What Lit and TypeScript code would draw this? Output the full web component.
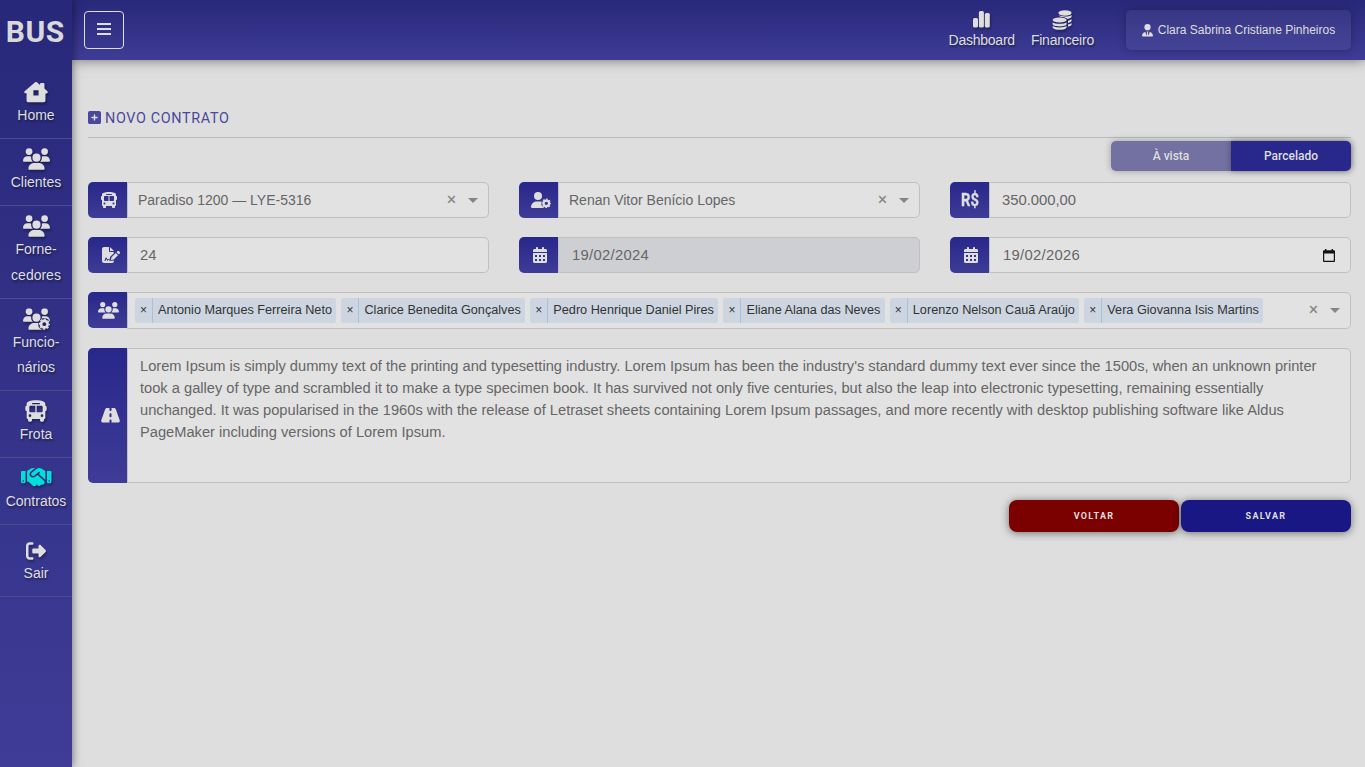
import { LitElement, html, css, svg } from "lit";
import { customElement } from "lit/decorators.js";

const USERS = svg`<path d="M144 0a80 80 0 1 1 0 160A80 80 0 1 1 144 0zM512 0a80 80 0 1 1 0 160A80 80 0 1 1 512 0zM0 298.7C0 239.8 47.8 192 106.7 192h42.7c15.9 0 31 3.5 44.6 9.7c-1.3 7.2-1.9 14.7-1.9 22.3c0 38.2 16.8 72.5 43.3 96H21.3C9.6 320 0 310.4 0 298.7zM405.3 320c26.6-23.5 43.3-57.8 43.3-96c0-7.6-.7-15-1.9-22.3c13.6-6.3 28.7-9.7 44.6-9.7h42.7C592.2 192 640 239.8 640 298.7c0 11.8-9.6 21.3-21.3 21.3H405.3zM224 224a96 96 0 1 1 192 0 96 96 0 1 1 -192 0zM128 485.3C128 411.7 187.7 352 261.3 352H378.7C452.3 352 512 411.7 512 485.3c0 14.7-11.9 26.7-26.7 26.7H154.7c-14.7 0-26.7-11.9-26.7-26.7z"/>`;
const BUS = svg`<path d="M288 0C422.4 0 512 35.2 512 80V128c17.7 0 32 14.3 32 32v64c0 17.7-14.3 32-32 32V416c0 17.7-14.3 32-32 32v32c0 17.7-14.3 32-32 32H416c-17.7 0-32-14.3-32-32V448H192v32c0 17.7-14.3 32-32 32H128c-17.7 0-32-14.3-32-32V448c-17.7 0-32-14.3-32-32V256c-17.7 0-32-14.3-32-32V160c0-17.7 14.3-32 32-32V80C64 35.2 153.6 0 288 0zM128 160v96c0 17.7 14.3 32 32 32H272V128H160c-17.7 0-32 14.3-32 32zM304 288H416c17.7 0 32-14.3 32-32V160c0-17.7-14.3-32-32-32H304V288zM144 400a32 32 0 1 0 0-64 32 32 0 1 0 0 64zm288 0a32 32 0 1 0 0-64 32 32 0 1 0 0 64zM384 80c0-8.800-7.200-16-16-16H208c-8.800 0-16 7.200-16 16s7.200 16 16 16H368c8.800 0 16-7.200 16-16z"/>`;
/* Gear of outer radius r: a solid ring with eight teeth around it. */
const gear = (cx: number, cy: number, r: number) => svg`
  <circle cx=${cx} cy=${cy} r=${r * 0.6} fill="none" stroke="currentColor" stroke-width=${r * 0.48}/>
  <circle cx=${cx} cy=${cy} r=${r * 0.9} fill="none" stroke="currentColor" stroke-width=${r * 0.24}
    pathLength="80" stroke-dasharray="5.5 4.5" stroke-dashoffset="2.7"/>`;

type IconDef = { box: string; body: unknown };
const ICONS: Record<string, IconDef> = {
  bars: { box: "0 0 16 16", body: svg`<path d="M1 2h14v2H1zM1 7h14v2H1zM1 12h14v2H1z"/>` },
  house: { box: "0 0 26 24", body: svg`<path fill-rule="evenodd" d="M12 1.4c.6-.5 1.4-.5 2 0l3.4 3V3.200c0-.6.4-1 1-1h2.800c.6 0 1 .4 1 1v5l3.200 2.900c1 .9.3 2.400-.9 2.400h-1.200v7.800c0 1.100-.9 2-2 2H4.700c-1.100 0-2-.9-2-2v-7.800H1.500c-1.200 0-1.800-1.500-.9-2.400zM10.200 10.200v5.600h5.600v-5.600z"/>` },
  users: { box: "0 0 640 512", body: USERS },
  usersGear: {
    box: "0 0 640 512",
    body: svg`<mask id="ug"><rect width="640" height="560" fill="#fff"/><circle cx="505" cy="378" r="146" fill="#000"/></mask>
      <g mask="url(#ug)">${USERS}</g>${gear(505, 378, 130)}`,
  },
  userGear: {
    box: "0 0 640 512",
    body: svg`<mask id="uc"><rect width="640" height="560" fill="#fff"/><circle cx="490" cy="360" r="164" fill="#000"/></mask>
      <path mask="url(#uc)" d="M224 256A128 128 0 1 0 224 0a128 128 0 1 0 0 256zM178.300 304C79.800 304 0 383.800 0 482.300C0 498.700 13.300 512 29.700 512H500V304z"/>${gear(490, 362, 148)}`,
  },
  bus: { box: "0 0 576 512", body: BUS },
  handshake: {
    box: "0 64 640 384",
    body: svg`<path d="M323.400 85.200l-96.800 78.400c-16.100 13-19.200 36.400-7 53.100c12.900 17.800 38 21.300 55.300 7.800l99.300-77.200c7-5.400 17-4.200 22.500 2.800s4.200 17-2.800 22.500l-20.900 16.200L512 316.800V128h-.7l-3.900-2.500L434.800 79c-15.300-9.800-33.200-15-51.400-15c-21.800 0-43 7.500-60 21.200zm22.800 124.400l-51.700 40.200C263 274.300 217.300 268 193.700 235.600c-22.200-30.500-16.600-73.100 12.700-96.800l83.200-67.300c-11.600-4.900-24.100-7.400-36.800-7.400C234 64 215.700 69.600 200 80l-72 48V352h28.200l91.400 83.400c19.600 17.900 49.900 16.500 67.800-3.100c5.500-6.100 9.200-13.200 11.100-20.600l17 15.600c19.500 17.900 49.900 16.600 67.800-2.900c4.500-4.900 7.800-10.600 9.900-16.500c19.400 13 45.800 10.300 62.100-7.500c17.900-19.500 16.600-49.900-2.900-67.800l-134.200-123zM16 128c-8.800 0-16 7.200-16 16V352c0 17.700 14.300 32 32 32H64c17.700 0 32-14.300 32-32V128H16zM48 320a16 16 0 1 1 0 32 16 16 0 1 1 0-32zM544 128V352c0 17.700 14.300 32 32 32h32c17.700 0 32-14.300 32-32V144c0-8.800-7.200-16-16-16H544zm32 208a16 16 0 1 1 32 0 16 16 0 1 1 -32 0z"/>`,
  },
  exit: { box: "0 0 512 512", body: svg`<path d="M377.900 105.900L500.700 228.700c7.200 7.200 11.300 17.100 11.300 27.300s-4.100 20.100-11.300 27.300L377.900 406.100c-6.400 6.400-15 9.900-24 9.900c-18.700 0-33.900-15.200-33.900-33.900V320H192c-17.700 0-32-14.300-32-32V224c0-17.700 14.300-32 32-32H320V129.900c0-18.700 15.200-33.900 33.900-33.900c9 0 17.600 3.600 24 9.900zM160 96H96c-17.700 0-32 14.300-32 32V384c0 17.700 14.300 32 32 32h64c17.700 0 32 14.300 32 32s-14.300 32-32 32H96c-53 0-96-43-96-96V128C0 75 43 32 96 32h64c17.700 0 32 14.300 32 32s-14.300 32-32 32z"/>` },
  chart: { box: "0 0 17 17", body: svg`<rect x="0" y="7" width="5" height="9.500" rx="1.600"/><rect x="5.900" y="0" width="5" height="16.500" rx="1.600"/><rect x="11.800" y="2" width="5" height="14.500" rx="1.600"/>` },
  coins: {
    box: "0 0 20 20",
    body: svg`<ellipse cx="13" cy="3" rx="6.600" ry="2.700"/><path d="M19.600 5v1.600c0 1.200-1.700 2.100-4.200 2.500-.8-1.400-3.700-2.300-7-2.400-.9-.4-1.500-.9-1.800-1.600 2.900 2 10.300 1.900 13-.1zM19.600 9v1.600c0 1-1.300 1.900-3.600 2.400v-2.300c1.500-.3 2.800-.9 3.600-1.700zM19.600 13v1.200c0 1-1.300 1.900-3.600 2.400v-2.100c1.500-.3 2.800-.8 3.600-1.500z"/>
      <ellipse cx="7.600" cy="10" rx="7" ry="2.500"/><path d="M.6 12.400c2.400 1.900 11.600 1.900 14 0V14c0 3.200-14 3.200-14 0zM.6 16c2.400 1.900 11.600 1.900 14 0v1.200c0 3.400-14 3.400-14 0z"/>`,
  },
  tie: { box: "0 0 448 512", body: svg`<path d="M96 128a128 128 0 1 0 256 0A128 128 0 1 0 96 128zm94.500 200.200l18.600 31L175.800 483.100l-36-146.900c-2-8.100-9.800-13.400-17.900-11.300C51.900 342.400 0 405.800 0 481.300c0 17 13.800 30.700 30.700 30.700H417.300c17 0 30.700-13.800 30.700-30.700c0-75.500-51.900-138.900-121.900-156.400c-8.100-2-15.900 3.300-17.900 11.300l-36 146.900L238.900 359.200l18.600-31c6.400-10.700-1.300-24.200-13.700-24.200H204.200c-12.400 0-20.100 13.600-13.700 24.200z"/>` },
  plus: { box: "0 32 448 448", body: svg`<path d="M64 32C28.700 32 0 60.700 0 96V416c0 35.300 28.700 64 64 64H384c35.300 0 64-28.700 64-64V96c0-35.300-28.700-64-64-64H64zM200 344V280H136c-13.300 0-24-10.700-24-24s10.700-24 24-24h64V168c0-13.300 10.700-24 24-24s24 10.700 24 24v64h64c13.300 0 24 10.700 24 24s-10.700 24-24 24H248v64c0 13.300-10.700 24-24 24s-24-10.700-24-24z"/>` },
  contract: {
    box: "0 0 576 512",
    body: svg`<path d="M64 0C28.700 0 0 28.700 0 64V448c0 35.300 28.700 64 64 64H320c35.300 0 64-28.700 64-64V430l-40 12H250c-14 0-22-6-28-16l-12-22-16 30c-8 12-26 12-32-2l-20-58-12 40c-6 20-18 28-40 28-9 0-16-7-16-14s6-15 14-15l20-60c8-24 40-24 48 0l15 45c10-16 30-18 44-4l20 19 27-98 116-115V160H256c-17.700 0-32-14.300-32-32V0zM256 0V128H384z"/>
      <path d="M549.800 139.700c-15.600-15.600-40.900-15.600-56.600 0l-29.400 29.400 71 71 29.400-29.400c15.600-15.600 15.600-40.900 0-56.600zM311.900 321c-4.100 4.100-7 9.200-8.400 14.900l-15 60.100c-1.400 5.500.2 11.200 4.200 15.200s9.700 5.600 15.200 4.200l60.100-15c5.600-1.400 10.800-4.300 14.900-8.400L512.100 262.700l-71-71z"/>`,
  },
  calendar: { box: "0 0 448 512", body: svg`<path fill-rule="evenodd" d="M128 0c17.700 0 32 14.300 32 32V64H288V32c0-17.700 14.300-32 32-32s32 14.300 32 32V64h48c26.500 0 48 21.500 48 48v48H0V112C0 85.500 21.500 64 48 64H96V32c0-17.700 14.300-32 32-32zM0 192H448V464c0 26.500-21.500 48-48 48H48c-26.500 0-48-21.500-48-48zM64 256v64h64v-64zM192 256v64h64v-64zM320 256v64h64v-64zM64 384v64h64v-64zM192 384v64h64v-64zM320 384v64h64v-64z"/>` },
  road: { box: "0 32 576 448", body: svg`<path d="M256 32H181.200c-27.100 0-51.300 17.100-60.300 42.600L3.100 407.200C1.100 413 0 419.200 0 425.400C0 455.500 24.500 480 54.600 480H256V416c0-17.700 14.300-32 32-32s32 14.300 32 32v64H521.400c30.200 0 54.600-24.500 54.600-54.600c0-6.200-1.100-12.400-3.100-18.200L455.100 74.600C446 49.100 421.900 32 394.800 32H320V96c0 17.700-14.300 32-32 32s-32-14.300-32-32zM320 224v64c0 17.700-14.300 32-32 32s-32-14.300-32-32V224c0-17.700 14.300-32 32-32s32 14.300 32 32z"/>` },
  picker: { box: "0 0 13 14", body: svg`<path fill-rule="evenodd" d="M2.200 0h1.500v1.300h5.600V0h1.500v1.300H12c.6 0 1 .4 1 1V13c0 .6-.4 1-1 1H1c-.6 0-1-.4-1-1V2.300c0-.6.4-1 1-1h1.200zM1.300 4.800v7.900h10.400V4.800z"/>` },
};

const icon = (name: string, w: number, h: number) => html`<svg
  width=${w} height=${h} viewBox=${ICONS[name].box} fill="currentColor" aria-hidden="true">${ICONS[name].body}</svg>`;

const MENU: { icon: string; w: number; h: number; lines: string[]; kind?: string }[] = [
  { icon: "house", w: 24, h: 22, lines: ["Home"] },
  { icon: "users", w: 27, h: 22, lines: ["Clientes"] },
  { icon: "users", w: 27, h: 22, lines: ["Forne-", "cedores"] },
  { icon: "usersGear", w: 27, h: 22, lines: ["Funcio-", "nários"] },
  { icon: "bus", w: 24, h: 22, lines: ["Frota"] },
  { icon: "handshake", w: 30.5, h: 18.3, lines: ["Contratos"], kind: "active" },
  { icon: "exit", w: 20, h: 20, lines: ["Sair"], kind: "last" },
];

const PEOPLE = [
  "Antonio Marques Ferreira Neto",
  "Clarice Benedita Gonçalves",
  "Pedro Henrique Daniel Pires",
  "Eliane Alana das Neves",
  "Lorenzo Nelson Cauã Araújo",
  "Vera Giovanna Isis Martins",
];

const NOTES = [
  "Lorem Ipsum is simply dummy text of the printing and typesetting industry. Lorem Ipsum has been the industry's standard dummy text ever since the 1500s, when an unknown printer",
  "took a galley of type and scrambled it to make a type specimen book. It has survived not only five centuries, but also the leap into electronic typesetting, remaining essentially",
  "unchanged. It was popularised in the 1960s with the release of Letraset sheets containing Lorem Ipsum passages, and more recently with desktop publishing software like Aldus",
  "PageMaker including versions of Lorem Ipsum.",
];

@customElement("app-root")
export class AppRoot extends LitElement {
  static styles = css`
    :host { display: block; height: 767px; overflow: hidden; font-family: "Liberation Sans", Arial, sans-serif; color: #666; }
    * { box-sizing: border-box; }
    svg { display: block; flex: none; overflow: visible; }
    .app { display: grid; grid-template-columns: 72px 1fr; height: 100%; background: #dedede; }
    .side { background: linear-gradient(#28287a, #3e3c96); color: #dedede; box-shadow: 0 0 9px rgba(0,0,0,.55); z-index: 2; text-align: center; }
    .logo { height: 72px; padding: 12px 1.5px 0 0; font: 700 30px/40px Roboto, sans-serif; letter-spacing: .6px; color: #d9d9d9; }
    .item { display: flex; flex-direction: column; align-items: center; padding: 9px 0 9.5px; border-bottom: 1px solid #4c4b92; font-size: 14px; line-height: 25.5px; }
    .item svg, .nav svg { filter: drop-shadow(1px 2px 1px rgba(0,0,0,.35)); }
    .glyph { height: 22px; display: flex; align-items: center; }
    .item span, .nav span { text-shadow: 1px 2px 2px rgba(0,0,0,.4); white-space: nowrap; }
    .active .glyph { color: #00dede; height: 21px; margin-bottom: 1px; }
    .last { padding: 15px 0 10.5px; }
    .last .glyph { height: 21px; margin-bottom: 1px; }
    .last span { line-height: 23.5px; }
    .main { display: flex; flex-direction: column; min-width: 0; }
    .top { height: 60px; display: flex; align-items: center; padding: 0 14px 0 12px; background: linear-gradient(#28287a, #3e3c96); box-shadow: 0 0 12px rgba(0,0,0,.5); color: #dedede; z-index: 1; }
    .burger { width: 40px; height: 38px; border: 1px solid #dedede; border-radius: 4px; display: grid; place-items: center; padding-bottom: 2px; }
    .navs { margin-left: auto; display: flex; gap: 16px; margin-right: 32px; }
    .nav { display: flex; flex-direction: column; align-items: center; font-size: 14px; letter-spacing: -.23px; line-height: 20px; height: 42px; }
    .nav .glyph { height: 21px; }
    .user { width: 225px; height: 40px; border-radius: 5px; background: rgba(255,255,255,.055); box-shadow: 0 0 8px rgba(0,0,0,.28); display: flex; align-items: center; justify-content: center; gap: 5px; font-size: 12px; white-space: nowrap; }
    .page { padding: 48px 14px 0 16px; }
    .title { display: flex; align-items: center; gap: 4px; height: 30px; padding-bottom: 10px; border-bottom: 1px solid #b9b9c2; color: #4a489d; font: 400 14.4px/20px Roboto, sans-serif; letter-spacing: .65px; }
    .title span { line-height: 20px; padding-top: 2px; }
    .switch { display: flex; width: 240px; height: 30px; margin: 3px 0 11px auto; border-radius: 5px; box-shadow: 0 0 7px rgba(0,0,0,.3); font: 500 12px/30px Roboto, sans-serif; text-align: center; color: #dedede; }
    .off { flex: 1; border-radius: 5px 0 0 5px; background: #7271a1; }
    .on { flex: 1; border-radius: 0 5px 5px 0; background: #28278b; box-shadow: 0 0 6px rgba(0,0,0,.35); }
    .grid { display: grid; grid-template-columns: repeat(3, 1fr); gap: 19px 30px; }
    .wide { grid-column: 1 / -1; }
    .field { display: flex; height: 36px; min-width: 0; }
    .badge { width: 39px; flex: none; display: flex; align-items: center; justify-content: center; padding-left: 3px; border-radius: 5px 0 0 5px; background: linear-gradient(#28278b, #3e3c96); color: #dedede; }
    .money { font: 700 18px/36px Roboto, sans-serif; padding-left: 0; }
    .real { transform: scaleX(.82); -webkit-text-stroke: .3px currentColor; }
    .flush { padding-left: 2px; }
    .doc { padding-left: 7px; }
    .gearBadge { padding-left: 5px; }
    .roadBadge { padding-left: 6px; }
    .value { flex: 1; min-width: 0; display: flex; align-items: center; border: 1px solid #c0c0c1; border-radius: 0 5px 5px 0; background: #e2e2e2; padding: 0 10px 0 12px; font-size: 14.8px; white-space: nowrap; }
    .select { font-size: 14px; padding-left: 10px; }
    .locked { background: #cecfd3; }
    .date { padding: 0 15px 0 13px; letter-spacing: .3px; }
    .grow { flex: 1; }
    .clear { font-size: 16px; line-height: 16px; padding-bottom: 1px; color: #858585; margin-right: 12px; -webkit-text-stroke: .3px #858585; }
    .caret { border: 5px solid transparent; border-top-color: #858585; border-bottom: 0; }
    .black { color: #111; }
    .chips { padding-left: 7px; gap: 5px; }
    .chips .clear { margin-right: 7px; }
    .people { height: 37px; }
    .people .badge { height: 36px; }
    .chip { display: flex; height: 25px; line-height: 25px; border-radius: 2px; background: #cdd6e0; color: #333; font-size: 12.68px; padding-right: 4.500px; margin-top: -1px; }
    .chip i { width: 18px; margin-right: 5px; border-right: 1px solid #a6c3de; text-align: center; font-style: normal; font-size: 12px; }
    .notes { height: 135px; }
    .text { display: block; padding-top: 6px; line-height: 22px; font-size: 14.67px; }
    .line { display: block; }
    .actions { display: flex; justify-content: flex-end; gap: 2px; margin-top: 17px; font: 700 9px/32px Roboto, sans-serif; letter-spacing: 1.300px; text-align: center; color: #dedede; }
    .btn { width: 170px; height: 32px; border-radius: 8px; box-shadow: 0 1px 9px rgba(0,0,0,.5); }
    .back { background: #7b0000; }
    .save { background: #181783; }
  `;

  private field(name: string, w: number, h: number, body: unknown, cls = "", badge = "") {
    return html`<div class="field ${cls}"><div class="badge ${badge}">${icon(name, w, h)}</div>${body}</div>`;
  }

  private select(text: string) {
    return html`<div class="value select"><span class="grow">${text}</span><span class="clear">×</span><span class="caret"></span></div>`;
  }

  render() {
    return html`<div class="app">
      <nav class="side">
        <div class="logo">BUS</div>
        ${MENU.map((m) => html`<div class="item ${m.kind ?? ""}">
          <div class="glyph">${icon(m.icon, m.w, m.h)}</div>
          ${m.lines.map((l) => html`<span>${l}</span>`)}
        </div>`)}
      </nav>
      <div class="main">
        <header class="top">
          <div class="burger">${icon("bars", 16, 16)}</div>
          <div class="navs">
            <div class="nav"><div class="glyph">${icon("chart", 17, 17)}</div><span>Dashboard</span></div>
            <div class="nav"><div class="glyph">${icon("coins", 20, 20)}</div><span>Financeiro</span></div>
          </div>
          <div class="user">${icon("tie", 11, 12.5)}<span>Clara Sabrina Cristiane Pinheiros</span></div>
        </header>
        <main class="page">
          <div class="title">${icon("plus", 13, 13)}<span>NOVO CONTRATO</span></div>
          <div class="switch"><div class="off">À vista</div><div class="on">Parcelado</div></div>
          <div class="grid">
            ${this.field("bus", 18, 16, this.select("Paradiso 1200 — LYE-5316"))}
            ${this.field("userGear", 20, 16, this.select("Renan Vitor Benício Lopes"), "", "gearBadge")}
            <div class="field"><div class="badge money"><span class="real">R$</span></div><div class="value">350.000,00</div></div>
            ${this.field("contract", 18, 16, html`<div class="value">24</div>`, "", "doc")}
            ${this.field("calendar", 14, 16, html`<div class="value locked date">19/02/2024</div>`)}
            ${this.field("calendar", 14, 16, html`<div class="value date"><span class="grow">19/02/2026</span><span class="black">${icon("picker", 12, 13)}</span></div>`)}
            ${this.field("users", 21, 16.8, html`<div class="value chips">
              ${PEOPLE.map((p) => html`<div class="chip"><i>×</i>${p}</div>`)}
              <span class="grow"></span><span class="clear">×</span><span class="caret"></span></div>`, "wide people", "flush")}
            ${this.field("road", 19, 14.500, html`<div class="value text">${NOTES.map((l) => html`<span class="line">${l}</span>`)}</div>`, "wide notes", "roadBadge")}
          </div>
          <div class="actions"><div class="btn back">VOLTAR</div><div class="btn save">SALVAR</div></div>
        </main>
      </div>
    </div>`;
  }
}
